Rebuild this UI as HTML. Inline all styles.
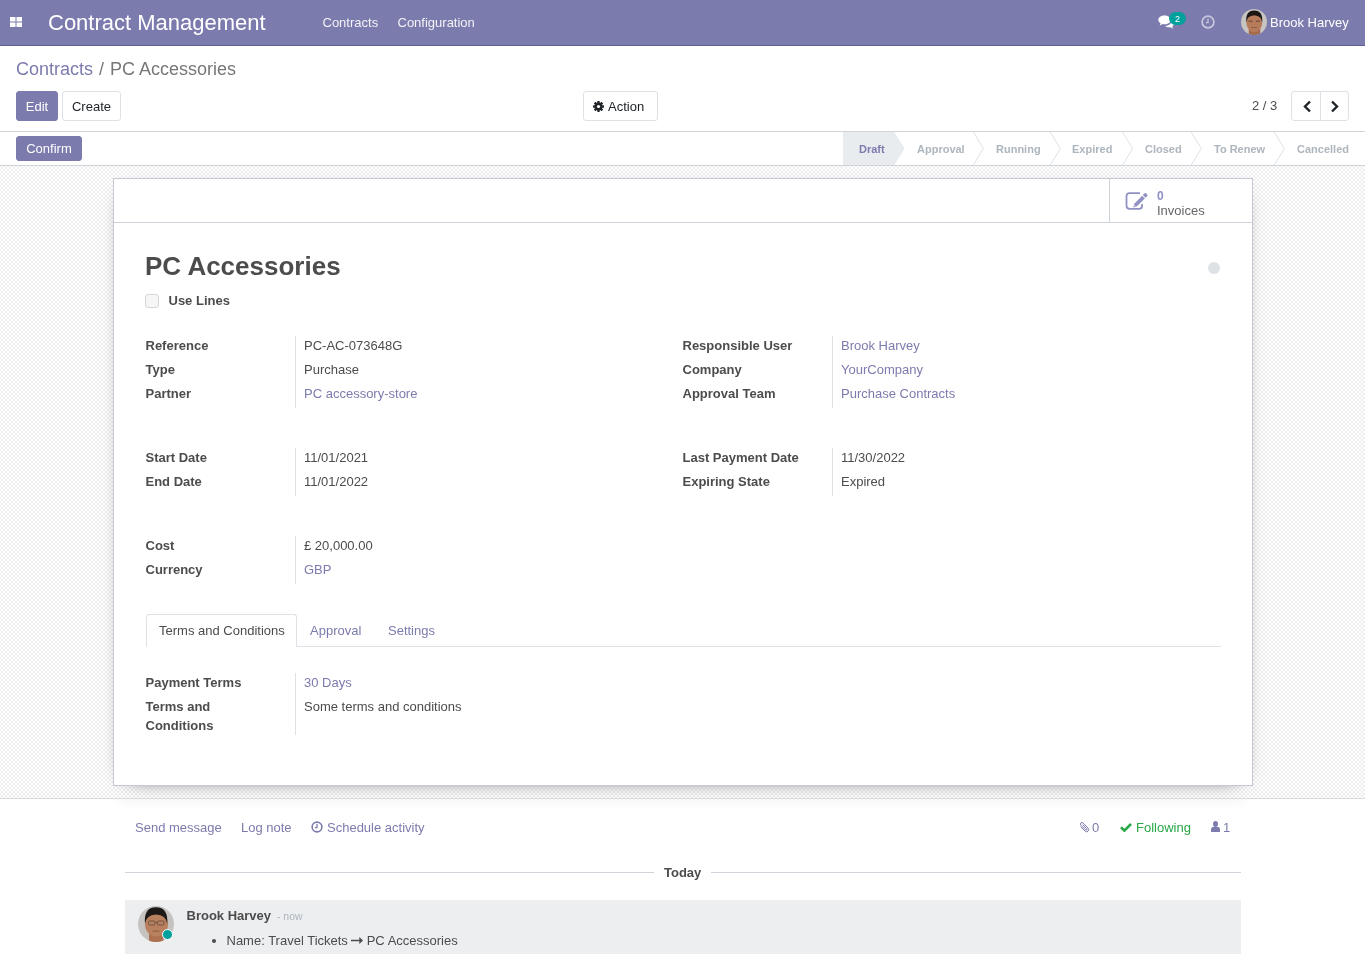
<!DOCTYPE html>
<html><head><meta charset="utf-8">
<style>
*{box-sizing:border-box}
html,body{margin:0;padding:0}
body{-webkit-font-smoothing:antialiased;will-change:transform}
body{width:1365px;height:954px;overflow:hidden;position:relative;font-family:"Liberation Sans",sans-serif;font-size:13px;color:#4c4c4c;background:#fff}
.abs{position:absolute}
.t{position:absolute;white-space:nowrap;line-height:1}
.lk{color:#7c7bad}
/* navbar */
.nav{position:absolute;left:0;top:0;width:1365px;height:46px;background:#7c7bad;border-bottom:1px solid #5f5e97;color:#fff}
/* control panel */
.cp{position:absolute;left:0;top:46px;width:1365px;height:86px;background:#fff;border-bottom:1px solid #d4d4d4}
.btn{position:absolute;height:30px;border-radius:3px;font-size:13px;line-height:30px;text-align:center;white-space:nowrap}
.btn-p{background:#7c7bad;color:#fff;border:1px solid #7c7bad}
.btn-s{background:#fff;color:#212529;border:1px solid #dee2e6}
.sb{position:absolute;left:0;top:132px;width:1365px;height:34px;background:#fff;border-bottom:1px solid #ced4da}
.st{position:absolute;top:12px;font-size:11px;font-weight:bold;line-height:1;white-space:nowrap;color:#adb5bd}
.fbg{position:absolute;left:0;top:166px;width:1365px;height:633px;
 background:repeating-conic-gradient(#ededed 0 25%,#fff 0 50%) 1px 3px/4px 4px;
 border-bottom:1px solid #dcdcdc}
.sheet{position:absolute;left:113px;top:178px;width:1140px;height:608px;background:#fff;border:1px solid #c7c8d6;box-shadow:0 5px 20px -15px #000}
.lbl{position:absolute;font-weight:bold;white-space:nowrap;line-height:1}
.val{position:absolute;white-space:nowrap;line-height:1}
.dv{position:absolute;width:1px;background:#dee2e6}
.chat{position:absolute;left:0;top:799px;width:1365px;height:155px;background:#fff}
</style></head><body>

<div class="nav">
  <svg class="abs" style="left:10px;top:17px" width="12" height="10" viewBox="0 0 12 10"><rect x="0" y="0" width="5.5" height="4.5" fill="#fff"/><rect x="6.5" y="0" width="5.5" height="4.5" fill="#fff"/><rect x="0" y="5.5" width="5.5" height="4.5" fill="#fff"/><rect x="6.5" y="5.5" width="5.5" height="4.5" fill="#fff"/></svg>
  <div class="t" style="left:48px;top:12px;font-size:22px">Contract Management</div>
  <div class="t" style="left:322.5px;top:16px;color:#f2f2f7">Contracts</div>
  <div class="t" style="left:397.5px;top:16px;color:#f2f2f7">Configuration</div>
  <!-- comments icon -->
  <svg class="abs" style="left:1158px;top:15px" width="16" height="14" viewBox="0 0 16 14">
    <path d="M6.5 0.5C3 0.5 0.3 2.4 0.3 4.8c0 1.4 0.9 2.6 2.3 3.4L1.6 10.6l3-1.6c0.6 0.1 1.2 0.2 1.9 0.2 3.5 0 6.2-1.9 6.2-4.3S10 0.5 6.5 0.5z" fill="#fff"/>
    <path d="M13.5 6.3c0 2.6-2.8 4.4-6.4 4.6 0.9 0.9 2.4 1.4 4 1.4 0.5 0 0.9 0 1.3-0.1l2.7 1.5-0.9-2.1c1.1-0.7 1.7-1.7 1.7-2.8 0-1-0.6-1.9-1.5-2.6z" fill="#fff"/>
  </svg>
  <div class="abs" style="left:1169px;top:12px;width:17px;height:13px;border-radius:7px;background:#00a09d;color:#fff;font-size:9px;line-height:15px;text-align:center">2</div>
  <!-- clock -->
  <svg class="abs" style="left:1201px;top:15px" width="14" height="14" viewBox="0 0 14 14">
    <circle cx="7" cy="7" r="5.9" fill="none" stroke="#c9c8e0" stroke-width="1.7"/>
    <path d="M7 3.6V7.6H4.9" fill="none" stroke="#c9c8e0" stroke-width="1.3"/>
  </svg>
  <!-- avatar -->
  <svg class="abs" style="left:1241px;top:9px" width="26" height="26" viewBox="0 0 26 26">
    <defs><clipPath id="cav"><circle cx="13" cy="13" r="13"/></clipPath></defs>
    <g clip-path="url(#cav)">
      <rect width="26" height="26" fill="#c7c4c1"/>
      <path d="M7.8 26 V18 H19.2 V26z" fill="#a4694b"/>
      <ellipse cx="13.3" cy="13.8" rx="7.9" ry="9.4" fill="#b67b5a"/>
      <path d="M5.3 13.5 Q4.2 1.6 13.2 1.5 Q22.2 1.6 21.2 13.5 Q20.6 6.8 13.2 6.3 Q5.9 6.8 5.3 13.5z" fill="#1b1715"/>
      <rect x="7.5" y="11.6" width="4" height="1.3" fill="#6a4533" opacity=".8"/><rect x="14.9" y="11.6" width="4" height="1.3" fill="#6a4533" opacity=".8"/>
      <rect x="10" y="18" width="6" height="1" fill="#7a4a36" opacity=".6"/>
    </g>
  </svg>
  <div class="t" style="left:1270px;top:16px">Brook Harvey</div>
</div>

<div class="cp">
  <div class="t" style="left:16px;top:14px;font-size:18px"><span class="lk">Contracts</span><span style="color:#777;padding-left:6px;padding-right:6px">/</span><span style="color:#777">PC Accessories</span></div>
  <div class="btn btn-p" style="left:16px;top:45px;width:42px">Edit</div>
  <div class="btn btn-s" style="left:62px;top:45px;width:59px">Create</div>
  <div class="btn btn-s" style="left:583px;top:45px;width:75px;text-align:left;padding-left:24px">Action</div>
  <svg class="abs" style="left:593px;top:55px" width="11" height="11" viewBox="0 0 11 11">
    <g fill="#212529"><circle cx="5.5" cy="5.5" r="3.9"/>
    <rect x="4.3" y="0" width="2.4" height="11" rx=".4"/><rect x="0" y="4.3" width="11" height="2.4" rx=".4"/>
    <rect x="4.3" y="0" width="2.4" height="11" rx=".4" transform="rotate(45 5.5 5.5)"/><rect x="4.3" y="0" width="2.4" height="11" rx=".4" transform="rotate(-45 5.5 5.5)"/></g>
    <circle cx="5.5" cy="5.5" r="1.6" fill="#fff"/>
  </svg>
  <div class="t" style="left:1252px;top:53px">2 / 3</div>
  <div class="btn btn-s" style="left:1291px;top:45px;width:58px"></div>
  <div class="abs" style="left:1320px;top:45px;width:1px;height:30px;background:#dee2e6"></div>
  <svg class="abs" style="left:1301.5px;top:53.5px" width="10" height="13" viewBox="0 0 10 13"><path d="M8 1.5 L3 6.5 L8 11.5" fill="none" stroke="#212529" stroke-width="2.4"/></svg>
  <svg class="abs" style="left:1329.5px;top:53.5px" width="10" height="13" viewBox="0 0 10 13"><path d="M2 1.5 L7 6.5 L2 11.5" fill="none" stroke="#212529" stroke-width="2.4"/></svg>
</div>

<div class="sb">
  <div class="btn btn-p" style="left:16px;top:4px;width:66px;height:25px;line-height:23px">Confirm</div>
  <svg class="abs" style="left:843px;top:0" width="522" height="33" viewBox="0 0 522 33">
    <path d="M0 0 H51.3 L61.6 16.5 L51.3 33 H0z" fill="#e9ecef"/>
    <g fill="none" stroke="#dee2e6" stroke-width="1">
      <path d="M130.4 0 L140.3 16.5 L130.4 33"/>
      <path d="M207.2 0 L217.4 16.5 L207.2 33"/>
      <path d="M279.5 0 L289.7 16.5 L279.5 33"/>
      <path d="M348.2 0 L358.4 16.5 L348.2 33"/>
      <path d="M431.2 0 L441.4 16.5 L431.2 33"/>
    </g>
  </svg>
  <div class="st" style="left:859px;color:#7c7bad">Draft</div>
  <div class="st" style="left:917px">Approval</div>
  <div class="st" style="left:996px">Running</div>
  <div class="st" style="left:1072px">Expired</div>
  <div class="st" style="left:1145px">Closed</div>
  <div class="st" style="left:1214px">To Renew</div>
  <div class="st" style="left:1297px">Cancelled</div>
</div>

<div class="fbg"></div>
<div class="sheet">
  <div class="abs" style="left:0;top:43px;width:1138px;height:1px;background:#ced4da"></div>
  <div class="abs" style="left:995px;top:0;width:1px;height:43px;background:#ced4da"></div>
  <svg class="abs" style="left:1011px;top:13px" width="24" height="19" viewBox="0 0 24 19">
    <path d="M15 1.2 H4.5 Q1.5 1.2 1.5 4.2 V13.8 Q1.5 16.8 4.5 16.8 H14.1 Q17.1 16.8 17.1 13.8 V12" fill="none" stroke="#9291c3" stroke-width="1.8"/>
    <g transform="translate(8.2,15.4) rotate(-45)" fill="#9291c3">
      <path d="M0 0 L3.4 -1.9 H14.6 V1.9 H3.4z"/>
      <path d="M15.5 -1.9 H17.6 Q19 -1.9 19 -0.5 V0.5 Q19 1.9 17.6 1.9 H15.5z"/>
      <path d="M1.3 -0.2 L2.6 -0.9 V0.9z" fill="#fff"/>
    </g>
  </svg>
  <div class="t" style="left:1043px;top:11px;font-size:12px;font-weight:bold;color:#8f8ec2">0</div>
  <div class="t" style="left:1043px;top:25px;color:#666">Invoices</div>

  <div class="t" style="left:31px;top:74px;font-size:26px;font-weight:bold;color:#4c4c4c">PC Accessories</div>
  <div class="abs" style="left:1094px;top:83px;width:12px;height:12px;border-radius:50%;background:#dee2e6"></div>
  <div class="abs" style="left:31px;top:115px;width:14px;height:14px;border:1px solid #d6d6d6;border-radius:3px;background:#f6f6f6"></div>
  <div class="lbl" style="left:54.5px;top:115px">Use Lines</div>

  <div class="lbl" style="left:31.5px;top:160px">Reference</div>
  <div class="lbl" style="left:31.5px;top:184px">Type</div>
  <div class="lbl" style="left:31.5px;top:208px">Partner</div>
  <div class="dv" style="left:181px;top:157px;height:72px"></div>
  <div class="val" style="left:190px;top:160px">PC-AC-073648G</div>
  <div class="val" style="left:190px;top:184px">Purchase</div>
  <div class="val lk" style="left:190px;top:208px">PC accessory-store</div>

  <div class="lbl" style="left:568.5px;top:160px">Responsible User</div>
  <div class="lbl" style="left:568.5px;top:184px">Company</div>
  <div class="lbl" style="left:568.5px;top:208px">Approval Team</div>
  <div class="dv" style="left:718px;top:157px;height:72px"></div>
  <div class="val lk" style="left:727px;top:160px">Brook Harvey</div>
  <div class="val lk" style="left:727px;top:184px">YourCompany</div>
  <div class="val lk" style="left:727px;top:208px">Purchase Contracts</div>

  <div class="lbl" style="left:31.5px;top:272px">Start Date</div>
  <div class="lbl" style="left:31.5px;top:296px">End Date</div>
  <div class="dv" style="left:181px;top:269px;height:48px"></div>
  <div class="val" style="left:190px;top:272px">11/01/2021</div>
  <div class="val" style="left:190px;top:296px">11/01/2022</div>

  <div class="lbl" style="left:568.5px;top:272px">Last Payment Date</div>
  <div class="lbl" style="left:568.5px;top:296px">Expiring State</div>
  <div class="dv" style="left:718px;top:269px;height:48px"></div>
  <div class="val" style="left:727px;top:272px">11/30/2022</div>
  <div class="val" style="left:727px;top:296px">Expired</div>

  <div class="lbl" style="left:31.5px;top:360px">Cost</div>
  <div class="lbl" style="left:31.5px;top:384px">Currency</div>
  <div class="dv" style="left:181px;top:357px;height:48px"></div>
  <div class="val" style="left:190px;top:360px">£ 20,000.00</div>
  <div class="val lk" style="left:190px;top:384px">GBP</div>

  <div class="abs" style="left:32px;top:467px;width:1075px;height:1px;background:#dee2e6"></div>
  <div class="abs" style="left:32px;top:435px;width:151px;height:33px;background:#fff;border:1px solid #dee2e6;border-bottom:none;border-radius:3px 3px 0 0"></div>
  <div class="val" style="left:45px;top:445px">Terms and Conditions</div>
  <div class="val lk" style="left:196px;top:445px">Approval</div>
  <div class="val lk" style="left:274px;top:445px">Settings</div>

  <div class="lbl" style="left:31.5px;top:497px">Payment Terms</div>
  <div class="lbl" style="left:31.5px;top:521px;line-height:19px;margin-top:-3px">Terms and<br>Conditions</div>
  <div class="dv" style="left:181px;top:494px;height:62px"></div>
  <div class="val lk" style="left:190px;top:497px">30 Days</div>
  <div class="val" style="left:190px;top:521px">Some terms and conditions</div>
</div>

<div class="chat">
  <div class="abs" style="left:0;top:0;width:1365px;height:40px;overflow:hidden"><div class="abs" style="left:120px;top:-30px;width:1125px;height:30px;box-shadow:0 0 14px rgba(0,0,0,.07)"></div></div>
  <div class="t lk" style="left:135px;top:22px">Send message</div>
  <div class="t lk" style="left:241px;top:22px">Log note</div>
  <svg class="abs" style="left:311px;top:22px" width="12" height="12" viewBox="0 0 12 12">
    <circle cx="6" cy="6" r="4.9" fill="none" stroke="#7c7bad" stroke-width="1.6"/>
    <path d="M6 3 V6.6 H4" fill="none" stroke="#7c7bad" stroke-width="1.3"/>
  </svg>
  <div class="t lk" style="left:327px;top:22px">Schedule activity</div>

  <svg class="abs" style="left:1079px;top:22px;transform:scaleX(-1)" width="11" height="12" viewBox="0 0 11 12">
    <path d="M9.3 5.6 L4.9 10.1 Q3.4 11.6 1.9 10.1 Q0.4 8.6 1.9 7.1 L6.9 2 Q8 0.9 9.1 2 Q10.2 3.1 9.1 4.2 L4.5 8.8 Q3.8 9.5 3.2 8.9 Q2.6 8.3 3.3 7.6 L7.3 3.6" fill="none" stroke="#7c7bad" stroke-width="1"/>
  </svg>
  <div class="t lk" style="left:1092px;top:22px">0</div>
  <svg class="abs" style="left:1120px;top:24px" width="12" height="9" viewBox="0 0 12 9">
    <path d="M1 4.3 L4.4 7.6 L11 1" fill="none" stroke="#28a745" stroke-width="2.6"/>
  </svg>
  <div class="t" style="left:1136px;top:22px;color:#28a745">Following</div>
  <svg class="abs" style="left:1211px;top:22px" width="9" height="11" viewBox="0 0 9 11">
    <ellipse cx="4.5" cy="3" rx="2.5" ry="2.9" fill="#7c7bad"/>
    <path d="M0 10.6 V8.6 Q0 6 2.3 6 H6.7 Q9 6 9 8.6 V10.6 Q9 11 8.6 11 H0.4 Q0 11 0 10.6z" fill="#7c7bad"/>
  </svg>
  <div class="t lk" style="left:1223px;top:22px">1</div>

  <div class="abs" style="left:125px;top:73px;width:529px;height:1px;background:#ced4da"></div>
  <div class="abs" style="left:711px;top:73px;width:530px;height:1px;background:#ced4da"></div>
  <div class="t" style="left:664px;top:67px;font-weight:bold">Today</div>

  <div class="abs" style="left:125px;top:101px;width:1116px;height:60px;background:#edeef0"></div>
  <svg class="abs" style="left:138px;top:107px" width="36" height="36" viewBox="0 0 36 36">
    <defs><clipPath id="cav2"><circle cx="18" cy="18" r="18"/></clipPath></defs>
    <g clip-path="url(#cav2)">
      <rect width="36" height="36" fill="#c5c2c0"/>
      <path d="M11 36 V25 H25.4 V36z" fill="#ad7150"/>
      <ellipse cx="18.5" cy="18.5" rx="11.5" ry="12" fill="#b98060"/>
      <path d="M7 18 Q5.5 1.2 18 1.2 Q30.5 1.2 29.2 18 Q28.5 9 18 8.4 Q7.8 9 7 18z" fill="#1d1917"/>
      <g fill="none" stroke="#5b463c" stroke-width=".9" opacity=".85"><rect x="10.5" y="15" width="6.5" height="4" rx="1.2"/><rect x="19.5" y="15" width="6.5" height="4" rx="1.2"/><path d="M17 16.5 H19.5"/></g>
      <rect x="14.5" y="24.5" width="7" height="1.2" fill="#7a4a36" opacity=".6"/>
    </g>
  </svg>
  <div class="abs" style="left:162px;top:130px;width:11px;height:11px;border-radius:50%;background:#00a09d;border:1.3px solid #fff"></div>
  <div class="t" style="left:186.5px;top:110px;font-weight:bold">Brook Harvey</div>
  <div class="t" style="left:277px;top:113px;font-size:10.4px;color:#adb5bd">- now</div>
  <div class="abs" style="left:212px;top:140px;width:4px;height:4px;border-radius:50%;background:#4c4c4c"></div>
  <div class="t" style="left:226.5px;top:135px">Name: Travel Tickets <span style="display:inline-block;width:11.6px"></span> PC Accessories</div>
  <svg class="abs" style="left:351px;top:138px" width="12" height="7" viewBox="0 0 13 7" preserveAspectRatio="none">
    <path d="M0 2.8 H9 V0 L13 3.5 L9 7 V4.2 H0z" fill="#4c4c4c"/>
  </svg>
</div>

</body></html>
